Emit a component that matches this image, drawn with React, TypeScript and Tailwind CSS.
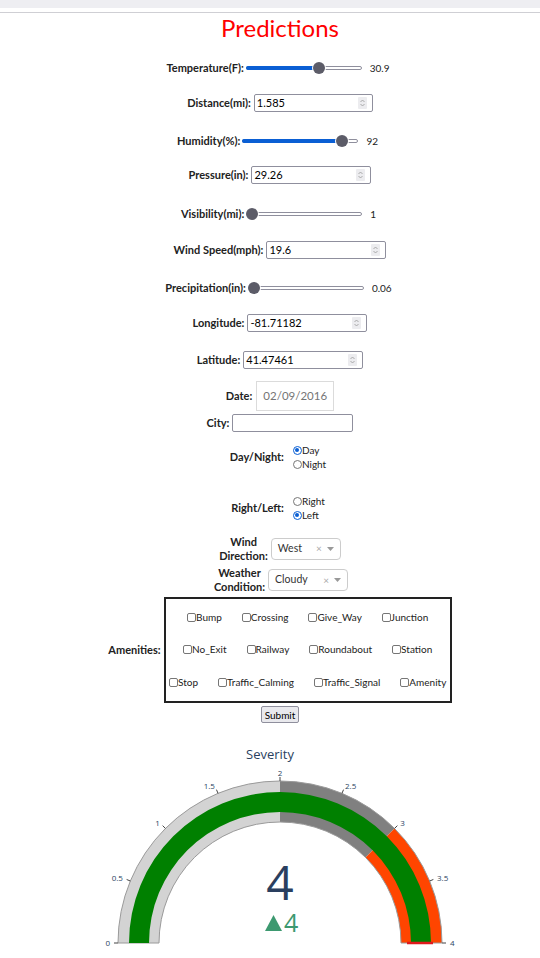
import type { ReactNode } from 'react';

const FONT = "font-['Lato','Liberation_Sans',sans-serif]";

function Label({ children }: { children: ReactNode }) {
  return <span className="text-[11px] font-bold text-[#222]">{children}</span>;
}

function Slider({ pos, value }: { pos: number; value: string }) {
  return (
    <div className="flex items-center">
      <div className="relative h-[14px] w-[116px]">
        <div className="absolute left-0 right-0 top-[5px] h-[4px] rounded-full border border-[#8f8f9d] bg-white" />
        <div className="absolute left-0 top-[5px] h-[4px] rounded-full bg-[#0a5fd4]" style={{ width: pos }} />
        <div
          className="absolute top-[1px] h-[12px] w-[12px] rounded-full bg-[#5c5c68] shadow-[0_0_0_1px_#fff]"
          style={{ left: pos - 6 }}
        />
      </div>
      <span className="ml-[8px] text-[10px] text-[#222]">{value}</span>
    </div>
  );
}

function Spinner() {
  return (
    <div className="flex h-[12px] w-[9px] items-center justify-center rounded-[1px] bg-[#ececef]">
      <svg width="5" height="8" viewBox="0 0 5 8" fill="none" stroke="#999" strokeWidth="0.8">
        <path d="M0.5 3L2.5 1L4.5 3" />
        <path d="M0.5 5L2.5 7L4.5 5" />
      </svg>
    </div>
  );
}

function NumInput({ value, width = 119 }: { value: string; width?: number }) {
  return (
    <div
      className="flex h-[18px] items-center justify-between rounded-[2px] border border-[#8f8f9d] bg-white pl-[2px] pr-[5px]"
      style={{ width }}
    >
      <span className="text-[11px] text-black">{value}</span>
      <Spinner />
    </div>
  );
}

function Radio({ checked, label }: { checked?: boolean; label: string }) {
  return (
    <div className="flex h-[14px] items-center">
      {checked ? (
        <div className="flex h-[9px] w-[9px] items-center justify-center rounded-full border-[1.5px] border-[#0a5fd4] bg-white">
          <div className="h-[4px] w-[4px] rounded-full bg-[#0a5fd4]" />
        </div>
      ) : (
        <div className="h-[9px] w-[9px] rounded-full border border-[#767676] bg-white" />
      )}
      <span className="text-[10px] text-[#222]">{label}</span>
    </div>
  );
}

function Select({ value, width }: { value: string; width: number }) {
  return (
    <div
      className="flex h-[22px] items-center rounded-[4px] border border-[#ccc] bg-white pl-[6px] pr-[6px]"
      style={{ width }}
    >
      <span className="flex-1 text-[10.5px] text-[#333]">{value}</span>
      <span className="mr-[5px] text-[10px] text-[#aaa]">×</span>
      <svg width="7" height="4" viewBox="0 0 7 4">
        <path d="M0 0H7L3.5 4Z" fill="#999" />
      </svg>
    </div>
  );
}

function Check({ label }: { label: string }) {
  return (
    <div className="flex items-center">
      <div className="h-[9px] w-[9px] rounded-[2px] border border-[#767676] bg-white" />
      <span className="text-[10px] text-[#222]">{label}</span>
    </div>
  );
}

const amenityRows = [
  ['Bump', 'Crossing', 'Give_Way', 'Junction'],
  ['No_Exit', 'Railway', 'Roundabout', 'Station'],
  ['Stop', 'Traffic_Calming', 'Traffic_Signal', 'Amenity'],
];

// gauge geometry
const CX = 280;
const CY = 180;
const ang = (v: number) => Math.PI * (1 - v / 4);
const pt = (v: number, r: number) => [CX + r * Math.cos(ang(v)), CY - r * Math.sin(ang(v))];

function band(v1: number, v2: number, r1: number, r2: number) {
  const [ax, ay] = pt(v1, r2);
  const [bx, by] = pt(v2, r2);
  const [cx, cy] = pt(v2, r1);
  const [dx, dy] = pt(v1, r1);
  return `M${ax} ${ay} A${r2} ${r2} 0 0 1 ${bx} ${by} L${cx} ${cy} A${r1} ${r1} 0 0 0 ${dx} ${dy} Z`;
}

const GF = "'Open Sans', 'Liberation Sans', sans-serif";

function Gauge() {
  const ticks = [0, 0.5, 1, 1.5, 2, 2.5, 3, 3.5, 4];
  return (
    <svg width="540" height="195" viewBox="0 0 540 195" className="block">
      <path d={band(0, 2, 121, 162)} fill="#d3d3d3" />
      <path d={band(2, 3, 121, 162)} fill="#808080" />
      <path d={band(3, 4, 121, 162)} fill="#ff4500" />
      <path d={band(0, 4, 121, 162)} fill="none" stroke="#9a9a9a" strokeWidth="1" />
      <path d={band(0, 4, 131, 151)} fill="#008000" />
      <line x1={CX + 127} y1={CY} x2={CX + 153} y2={CY} stroke="#e0191c" strokeWidth="2.5" />
      {ticks.map((t) => {
        const [x1, y1] = pt(t, 162);
        const [x2, y2] = pt(t, 166);
        const [lx, ly] = pt(t, 170);
        const anchor = t < 2 ? 'end' : t > 2 ? 'start' : 'middle';
        return (
          <g key={t}>
            <line x1={x1} y1={y1} x2={x2} y2={y2} stroke="#444" strokeWidth="1" />
            <text x={lx} y={ly + 3} textAnchor={anchor} fontSize="8" fill="#2a3f5f" fontFamily={GF}>
              {t}
            </text>
          </g>
        );
      })}
      <text x={CX} y={137} textAnchor="middle" fontSize="48" fill="#2a3f5f" fontFamily={GF}>
        4
      </text>
      <path d="M265 168L273.5 152L282 168Z" fill="#3d9970" />
      <text x={284} y={169} fontSize="25" fill="#3d9970" fontFamily={GF}>
        4
      </text>
    </svg>
  );
}

export default function App() {
  return (
    <div className={`min-h-[958px] w-[540px] bg-white ${FONT}`}>
      <div className="h-[8px] bg-[#eeeef2]" />
      <div className="h-[4px]" />
      <div className="h-px bg-[#cfcfd4]" />
      <div className="pl-[20px]">
        <h1 className="mt-[1px] text-center text-[24px] leading-[28px] text-[#ff0000]">Predictions</h1>

        <div className="mt-[16px] flex h-[20px] items-center justify-center gap-[2px] pr-[4px]">
          <Label>Temperature(F):</Label>
          <Slider pos={73} value="30.9" />
        </div>
        <div className="mt-[15px] flex h-[20px] items-center justify-center gap-[3px]">
          <Label>Distance(mi):</Label>
          <NumInput value="1.585" />
        </div>
        <div className="mt-[18px] flex h-[20px] items-center justify-center gap-[2px] pr-[5px]">
          <Label>Humidity(%):</Label>
          <Slider pos={100} value="92" />
        </div>
        <div className="mt-[14px] flex h-[20px] items-center justify-center gap-[3px]">
          <Label>Pressure(in):</Label>
          <NumInput value="29.26" width={120} />
        </div>
        <div className="mt-[19px] flex h-[20px] items-center justify-center gap-[2px] pr-[3px]">
          <Label>Visibility(mi):</Label>
          <Slider pos={6} value="1" />
        </div>
        <div className="mt-[16px] flex h-[20px] items-center justify-center gap-[3px]">
          <Label>Wind Speed(mph):</Label>
          <NumInput value="19.6" width={120} />
        </div>
        <div className="mt-[18px] flex h-[20px] items-center justify-center gap-[2px] pr-[3px]">
          <Label>Precipitation(in):</Label>
          <Slider pos={6} value="0.06" />
        </div>
        <div className="mt-[15px] flex h-[20px] items-center justify-center gap-[3px]">
          <Label>Longitude:</Label>
          <NumInput value="-81.71182" width={120} />
        </div>
        <div className="mt-[17px] flex h-[20px] items-center justify-center gap-[3px]">
          <Label>Latitude:</Label>
          <NumInput value="41.47461" width={120} />
        </div>
        <div className="mt-[11px] flex h-[30px] items-center justify-center gap-[4px]">
          <Label>Date:</Label>
          <div className="flex h-[30px] w-[78px] items-center justify-center border border-[#dbdbdb] bg-white">
            <span className="text-[11.5px] text-[#757575]">02/09/2016</span>
          </div>
        </div>
        <div className="mt-[3px] flex h-[18px] items-center justify-center gap-[3px]">
          <Label>City:</Label>
          <div className="h-[18px] w-[121px] rounded-[2px] border border-[#8f8f9d] bg-white" />
        </div>
        <div className="mt-[11px] flex h-[28px] items-center justify-center gap-[9px] pr-[4px]">
          <Label>Day/Night:</Label>
          <div className="flex flex-col">
            <Radio checked label="Day" />
            <Radio label="Night" />
          </div>
        </div>
        <div className="mt-[23px] flex h-[28px] items-center justify-center gap-[9px] pr-[4px]">
          <Label>Right/Left:</Label>
          <div className="flex flex-col">
            <Radio label="Right" />
            <Radio checked label="Left" />
          </div>
        </div>
        <div className="mt-[13px] flex h-[27px] items-center justify-center gap-[3px]">
          <div className="text-center text-[11px] font-bold leading-[14px] text-[#222]">
            Wind
            <br />
            Direction:
          </div>
          <Select value="West" width={70} />
        </div>
        <div className="mt-[4px] flex h-[28px] items-center justify-center gap-[3px] pl-[2px]">
          <div className="text-center text-[11px] font-bold leading-[14px] text-[#222]">
            Weather
            <br />
            Condition:
          </div>
          <Select value="Cloudy" width={80} />
        </div>
        <div className="mt-[3px] flex items-center justify-center gap-[3px]">
          <Label>Amenities:</Label>
          <div className="flex h-[106px] w-[288px] flex-col justify-around border-2 border-[#222] py-[2px]">
            {amenityRows.map((row, i) => (
              <div key={i} className="flex justify-center gap-[20px]">
                {row.map((a) => (
                  <Check key={a} label={a} />
                ))}
              </div>
            ))}
          </div>
        </div>
        <div className="mt-[3px] flex justify-center">
          <button className="h-[17px] rounded-[2px] border border-[#8f8f9d] bg-[#e9e9ed] px-[3px] text-[10px] leading-none text-black">
            Submit
          </button>
        </div>
      </div>
      <div className="mt-[22px] text-center font-['Open_Sans',sans-serif] text-[13px] leading-[18px] text-[#2a3f5f]">
        Severity
      </div>
      <Gauge />
    </div>
  );
}
